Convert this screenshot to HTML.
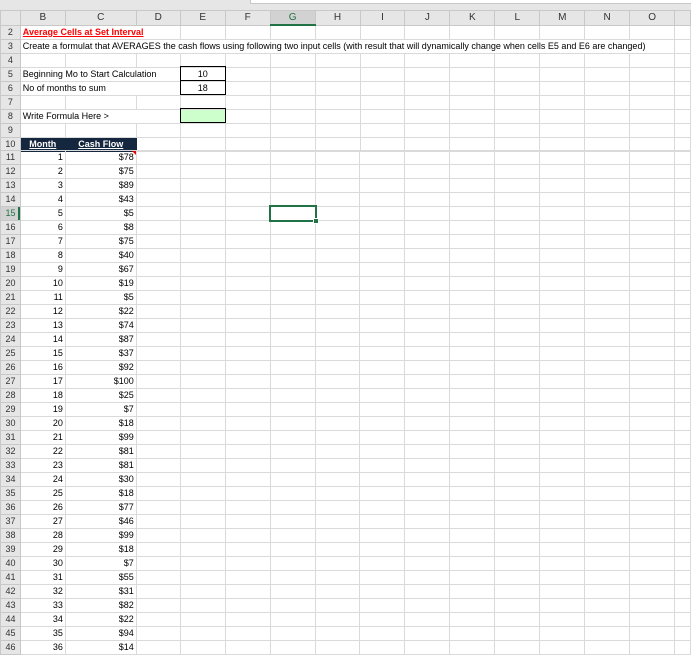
<!DOCTYPE html>
<html><head><style>
body{margin:0;width:691px;height:658px;overflow:hidden;background:#fff;font-family:"Liberation Sans",sans-serif;font-size:9px;color:#000;position:relative}
.top{position:absolute;left:0;top:0;width:691px;height:11px;background:#e6e6e6}
.top div{position:absolute;left:250px;top:0;width:441px;height:3px;background:#fff;border-left:1px solid #c8c8c8;border-bottom:1px solid #c8c8c8}
table{position:absolute;left:0;top:10px;border-collapse:collapse;table-layout:fixed}
td{border:1px solid #dadada;height:13px;padding:0 2px;white-space:nowrap;overflow:visible;line-height:13px}
tr.h td{background:#e6e6e6;text-align:center;border-color:#c8c8c8;font-size:10px;color:#333}
td.r{background:#e6e6e6;text-align:center;border-color:#c8c8c8;color:#333;padding:0}
.n{text-align:right}
.mh{background:#14273e;color:#fff;font-weight:bold;text-decoration:underline;text-align:center;border-color:#14273e}
.ov{position:absolute;box-sizing:border-box}
</style></head><body>
<div class="top"><div></div></div>
<table>
<colgroup><col style="width:20px"><col style="width:45px"><col style="width:71px"><col style="width:44px"><col style="width:45px"><col style="width:45px"><col style="width:45px"><col style="width:45px"><col style="width:45px"><col style="width:45px"><col style="width:45px"><col style="width:45px"><col style="width:45px"><col style="width:45px"><col style="width:45px"><col style="width:16px"></colgroup>
<tr class="h"><td></td><td>B</td><td>C</td><td>D</td><td>E</td><td>F</td><td style="border-bottom:2px solid #217346;color:#217346;background:#d2d2d2">G</td><td>H</td><td>I</td><td>J</td><td>K</td><td>L</td><td>M</td><td>N</td><td>O</td><td></td></tr>
<tr><td class="r">2</td><td colspan="3" style="color:#f00;font-weight:bold;text-decoration:underline">Average Cells at Set Interval</td><td></td><td></td><td></td><td></td><td></td><td></td><td></td><td></td><td></td><td></td><td></td><td></td></tr>
<tr><td class="r">3</td><td colspan="14" style="overflow:hidden">Create a formulat that AVERAGES the cash flows using following two input cells (with result that will dynamically change when cells E5 and E6 are changed)</td><td></td></tr>
<tr><td class="r">4</td><td></td><td></td><td></td><td></td><td></td><td></td><td></td><td></td><td></td><td></td><td></td><td></td><td></td><td></td><td></td></tr>
<tr><td class="r">5</td><td colspan="3">Beginning Mo to Start Calculation</td><td style="text-align:center">10</td><td></td><td></td><td></td><td></td><td></td><td></td><td></td><td></td><td></td><td></td><td></td></tr>
<tr><td class="r">6</td><td colspan="3">No of months to sum</td><td style="text-align:center">18</td><td></td><td></td><td></td><td></td><td></td><td></td><td></td><td></td><td></td><td></td><td></td></tr>
<tr><td class="r">7</td><td></td><td></td><td></td><td></td><td></td><td></td><td></td><td></td><td></td><td></td><td></td><td></td><td></td><td></td><td></td></tr>
<tr><td class="r">8</td><td colspan="3">Write Formula Here &gt;</td><td style="background:#ccffcc"></td><td></td><td></td><td></td><td></td><td></td><td></td><td></td><td></td><td></td><td></td><td></td></tr>
<tr><td class="r">9</td><td></td><td></td><td></td><td></td><td></td><td></td><td></td><td></td><td></td><td></td><td></td><td></td><td></td><td></td><td></td></tr>
<tr><td class="r">10</td><td class="mh">Month</td><td class="mh">Cash Flow</td><td></td><td></td><td></td><td></td><td></td><td></td><td></td><td></td><td></td><td></td><td></td><td></td><td></td></tr>
</table>
<table style="top:150px">
<colgroup><col style="width:20px"><col style="width:45px"><col style="width:71px"><col style="width:44px"><col style="width:45px"><col style="width:45px"><col style="width:45px"><col style="width:45px"><col style="width:45px"><col style="width:45px"><col style="width:45px"><col style="width:45px"><col style="width:45px"><col style="width:45px"><col style="width:45px"><col style="width:16px"></colgroup>
<tr><td class="r">11</td><td class="n">1</td><td class="n" style="position:relative">$78<span style="position:absolute;right:0;top:0;border-left:4px solid transparent;border-top:4px solid #e00"></span></td><td></td><td></td><td></td><td></td><td></td><td></td><td></td><td></td><td></td><td></td><td></td><td></td><td></td></tr>
<tr><td class="r">12</td><td class="n">2</td><td class="n">$75</td><td></td><td></td><td></td><td></td><td></td><td></td><td></td><td></td><td></td><td></td><td></td><td></td><td></td></tr>
<tr><td class="r">13</td><td class="n">3</td><td class="n">$89</td><td></td><td></td><td></td><td></td><td></td><td></td><td></td><td></td><td></td><td></td><td></td><td></td><td></td></tr>
<tr><td class="r">14</td><td class="n">4</td><td class="n">$43</td><td></td><td></td><td></td><td></td><td></td><td></td><td></td><td></td><td></td><td></td><td></td><td></td><td></td></tr>
<tr><td class="r" style="background:#d2d2d2;color:#217346;box-shadow:inset -2px 0 #217346">15</td><td class="n">5</td><td class="n">$5</td><td></td><td></td><td></td><td id="sel"></td><td></td><td></td><td></td><td></td><td></td><td></td><td></td><td></td><td></td></tr>
<tr><td class="r">16</td><td class="n">6</td><td class="n">$8</td><td></td><td></td><td></td><td></td><td></td><td></td><td></td><td></td><td></td><td></td><td></td><td></td><td></td></tr>
<tr><td class="r">17</td><td class="n">7</td><td class="n">$75</td><td></td><td></td><td></td><td></td><td></td><td></td><td></td><td></td><td></td><td></td><td></td><td></td><td></td></tr>
<tr><td class="r">18</td><td class="n">8</td><td class="n">$40</td><td></td><td></td><td></td><td></td><td></td><td></td><td></td><td></td><td></td><td></td><td></td><td></td><td></td></tr>
<tr><td class="r">19</td><td class="n">9</td><td class="n">$67</td><td></td><td></td><td></td><td></td><td></td><td></td><td></td><td></td><td></td><td></td><td></td><td></td><td></td></tr>
<tr><td class="r">20</td><td class="n">10</td><td class="n">$19</td><td></td><td></td><td></td><td></td><td></td><td></td><td></td><td></td><td></td><td></td><td></td><td></td><td></td></tr>
<tr><td class="r">21</td><td class="n">11</td><td class="n">$5</td><td></td><td></td><td></td><td></td><td></td><td></td><td></td><td></td><td></td><td></td><td></td><td></td><td></td></tr>
<tr><td class="r">22</td><td class="n">12</td><td class="n">$22</td><td></td><td></td><td></td><td></td><td></td><td></td><td></td><td></td><td></td><td></td><td></td><td></td><td></td></tr>
<tr><td class="r">23</td><td class="n">13</td><td class="n">$74</td><td></td><td></td><td></td><td></td><td></td><td></td><td></td><td></td><td></td><td></td><td></td><td></td><td></td></tr>
<tr><td class="r">24</td><td class="n">14</td><td class="n">$87</td><td></td><td></td><td></td><td></td><td></td><td></td><td></td><td></td><td></td><td></td><td></td><td></td><td></td></tr>
<tr><td class="r">25</td><td class="n">15</td><td class="n">$37</td><td></td><td></td><td></td><td></td><td></td><td></td><td></td><td></td><td></td><td></td><td></td><td></td><td></td></tr>
<tr><td class="r">26</td><td class="n">16</td><td class="n">$92</td><td></td><td></td><td></td><td></td><td></td><td></td><td></td><td></td><td></td><td></td><td></td><td></td><td></td></tr>
<tr><td class="r">27</td><td class="n">17</td><td class="n">$100</td><td></td><td></td><td></td><td></td><td></td><td></td><td></td><td></td><td></td><td></td><td></td><td></td><td></td></tr>
<tr><td class="r">28</td><td class="n">18</td><td class="n">$25</td><td></td><td></td><td></td><td></td><td></td><td></td><td></td><td></td><td></td><td></td><td></td><td></td><td></td></tr>
<tr><td class="r">29</td><td class="n">19</td><td class="n">$7</td><td></td><td></td><td></td><td></td><td></td><td></td><td></td><td></td><td></td><td></td><td></td><td></td><td></td></tr>
<tr><td class="r">30</td><td class="n">20</td><td class="n">$18</td><td></td><td></td><td></td><td></td><td></td><td></td><td></td><td></td><td></td><td></td><td></td><td></td><td></td></tr>
<tr><td class="r">31</td><td class="n">21</td><td class="n">$99</td><td></td><td></td><td></td><td></td><td></td><td></td><td></td><td></td><td></td><td></td><td></td><td></td><td></td></tr>
<tr><td class="r">32</td><td class="n">22</td><td class="n">$81</td><td></td><td></td><td></td><td></td><td></td><td></td><td></td><td></td><td></td><td></td><td></td><td></td><td></td></tr>
<tr><td class="r">33</td><td class="n">23</td><td class="n">$81</td><td></td><td></td><td></td><td></td><td></td><td></td><td></td><td></td><td></td><td></td><td></td><td></td><td></td></tr>
<tr><td class="r">34</td><td class="n">24</td><td class="n">$30</td><td></td><td></td><td></td><td></td><td></td><td></td><td></td><td></td><td></td><td></td><td></td><td></td><td></td></tr>
<tr><td class="r">35</td><td class="n">25</td><td class="n">$18</td><td></td><td></td><td></td><td></td><td></td><td></td><td></td><td></td><td></td><td></td><td></td><td></td><td></td></tr>
<tr><td class="r">36</td><td class="n">26</td><td class="n">$77</td><td></td><td></td><td></td><td></td><td></td><td></td><td></td><td></td><td></td><td></td><td></td><td></td><td></td></tr>
<tr><td class="r">37</td><td class="n">27</td><td class="n">$46</td><td></td><td></td><td></td><td></td><td></td><td></td><td></td><td></td><td></td><td></td><td></td><td></td><td></td></tr>
<tr><td class="r">38</td><td class="n">28</td><td class="n">$99</td><td></td><td></td><td></td><td></td><td></td><td></td><td></td><td></td><td></td><td></td><td></td><td></td><td></td></tr>
<tr><td class="r">39</td><td class="n">29</td><td class="n">$18</td><td></td><td></td><td></td><td></td><td></td><td></td><td></td><td></td><td></td><td></td><td></td><td></td><td></td></tr>
<tr><td class="r">40</td><td class="n">30</td><td class="n">$7</td><td></td><td></td><td></td><td></td><td></td><td></td><td></td><td></td><td></td><td></td><td></td><td></td><td></td></tr>
<tr><td class="r">41</td><td class="n">31</td><td class="n">$55</td><td></td><td></td><td></td><td></td><td></td><td></td><td></td><td></td><td></td><td></td><td></td><td></td><td></td></tr>
<tr><td class="r">42</td><td class="n">32</td><td class="n">$31</td><td></td><td></td><td></td><td></td><td></td><td></td><td></td><td></td><td></td><td></td><td></td><td></td><td></td></tr>
<tr><td class="r">43</td><td class="n">33</td><td class="n">$82</td><td></td><td></td><td></td><td></td><td></td><td></td><td></td><td></td><td></td><td></td><td></td><td></td><td></td></tr>
<tr><td class="r">44</td><td class="n">34</td><td class="n">$22</td><td></td><td></td><td></td><td></td><td></td><td></td><td></td><td></td><td></td><td></td><td></td><td></td><td></td></tr>
<tr><td class="r">45</td><td class="n">35</td><td class="n">$94</td><td></td><td></td><td></td><td></td><td></td><td></td><td></td><td></td><td></td><td></td><td></td><td></td><td></td></tr>
<tr><td class="r">46</td><td class="n">36</td><td class="n">$14</td><td></td><td></td><td></td><td></td><td></td><td></td><td></td><td></td><td></td><td></td><td></td><td></td><td></td></tr>
</table>
<div class="ov" style="left:180px;top:66px;width:46px;height:15px;border:1px solid #000"></div>
<div class="ov" style="left:180px;top:80px;width:46px;height:15px;border:1px solid #000"></div>
<div class="ov" style="left:180px;top:108px;width:46px;height:15px;border:1px solid #000"></div>
<div class="ov" style="left:269px;top:205px;width:48px;height:17px;border:2px solid #217346"></div>
<div class="ov" style="left:313px;top:218px;width:6px;height:6px;background:#217346;border:1px solid #fff"></div>
</body></html>
